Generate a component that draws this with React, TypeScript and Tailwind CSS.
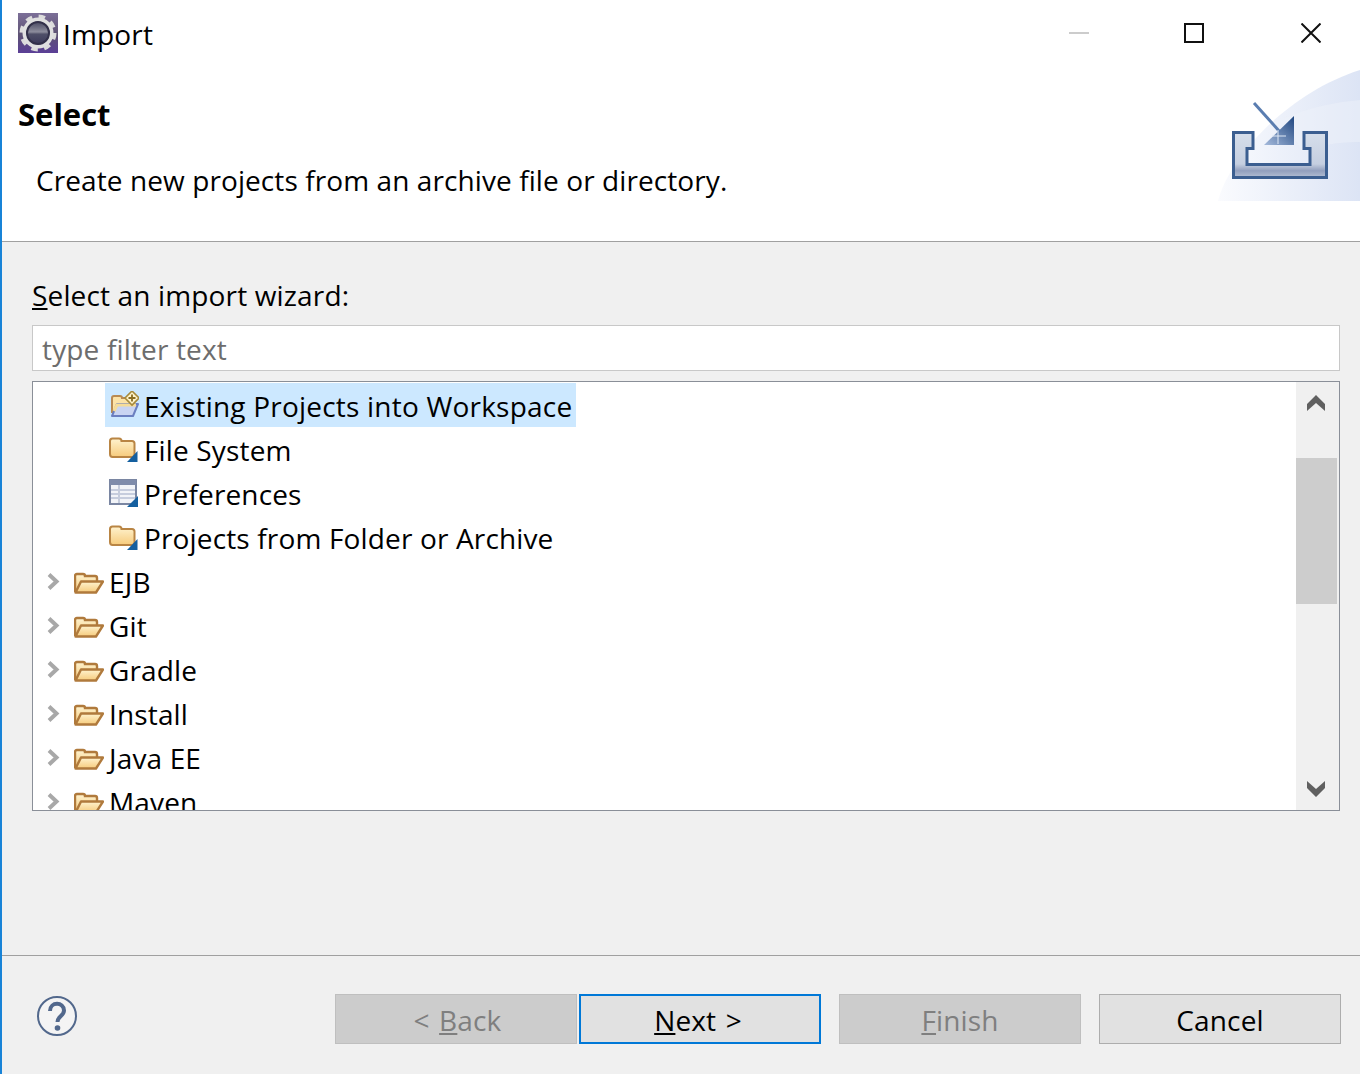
import React from 'react';

const GearIcon = () => (
  <svg width="40" height="40" viewBox="0 0 40 40">
    <defs>
      <linearGradient id="gearBg" x1="0" y1="0" x2="0" y2="1">
        <stop offset="0" stopColor="#7c6f98" />
        <stop offset="0.55" stopColor="#5d5273" />
        <stop offset="1" stopColor="#5b3f97" />
      </linearGradient>
      <linearGradient id="gearHole" x1="0" y1="0" x2="0" y2="1">
        <stop offset="0" stopColor="#4a4a63" />
        <stop offset="0.45" stopColor="#8d8d9c" />
        <stop offset="0.55" stopColor="#4f4f68" />
        <stop offset="1" stopColor="#3c3a5a" />
      </linearGradient>
    </defs>
    <rect width="40" height="40" fill="url(#gearBg)" />
    <circle cx="20" cy="20" r="15" fill="none" stroke="#dcdcdc" strokeWidth="7" strokeDasharray="5.9 5.9" />
    <circle cx="20" cy="20" r="13.5" fill="none" stroke="#e0e0e0" strokeWidth="4" />
    <circle cx="20" cy="20" r="11" fill="url(#gearHole)" stroke="#33314a" strokeWidth="2" />
  </svg>
);

const Banner = () => (
  <svg width="142" height="131" viewBox="0 0 142 131">
    <defs>
      <linearGradient id="swoosh" x1="0" y1="0.6" x2="1" y2="0.6">
        <stop offset="0" stopColor="#fafbfe" />
        <stop offset="1" stopColor="#dce4f5" />
      </linearGradient>
      <linearGradient id="tray" x1="0" y1="0" x2="0" y2="1">
        <stop offset="0" stopColor="#d6deeb" />
        <stop offset="0.7" stopColor="#c5cfe0" />
        <stop offset="0.85" stopColor="#929fbd" />
        <stop offset="1" stopColor="#b4bfd4" />
      </linearGradient>
      <linearGradient id="tri" x1="1" y1="0" x2="0" y2="1">
        <stop offset="0" stopColor="#1f4680" />
        <stop offset="1" stopColor="#a6bbdc" />
      </linearGradient>
    </defs>
    <path d="M0 131 C12 85 72 22 142 0 V131 Z" fill="url(#swoosh)" />
    <path d="M66 48 C90 38 116 32 142 30 V72 C118 72 100 76 84 82 Z" fill="#eef2fa" opacity="0.5" />
    <path d="M15.5 62.5 H35 V78.5 H29 V94.5 H92 V78.5 H86 V62.5 H108.5 V107.5 H15.5 Z" fill="url(#tray)" stroke="#3b5e90" strokeWidth="3" />
    <polygon points="76,46 46,75 76,75" fill="url(#tri)" />
    <line x1="36" y1="33" x2="62" y2="62" stroke="#5a7db0" strokeWidth="3" />
    <path d="M60 60 V74 M54 66 H68" stroke="#dfe8f5" strokeWidth="1" />
  </svg>
);

const FolderGradient = ({ id }: { id: string }) => (
  <defs>
    <linearGradient id={id} x1="0" y1="0" x2="0" y2="1">
      <stop offset="0" stopColor="#fff3cf" />
      <stop offset="1" stopColor="#f6cb7c" />
    </linearGradient>
  </defs>
);

const OpenFolder = () => (
  <svg width="30" height="22" viewBox="0 0 30 22" className="shrink-0">
    <FolderGradient id="openFill" />
    <path d="M1 20 V4 Q1 2 3 2 H9 Q11 2 11 4 H21 Q23 4 23 6 V9" fill="url(#openFill)" stroke="#b07a3c" strokeWidth="2.4" />
    <path d="M1.5 20.5 L7 9.5 H29 L22 20.5 Z" fill="url(#openFill)" stroke="#b07a3c" strokeWidth="2.4" strokeLinejoin="round" />
  </svg>
);

const ClosedFolder = ({ id }: { id: string }) => (
  <svg width="30" height="25" viewBox="0 0 30 25" className="shrink-0">
    <FolderGradient id={id} />
    <path d="M1 17 V4 Q1 1.5 3.5 1.5 H10 Q12.5 1.5 12.5 4 H23 Q25.5 4 25.5 6.5 V17 Q25.5 20 23 20 H3.5 Q1 20 1 17 Z" fill={`url(#${id})`} stroke="#b98544" strokeWidth="2" />
    <polygon points="28.5,14 28.5,25 18,25" fill="#145f9f" />
  </svg>
);

const PrefsIcon = () => (
  <svg width="30" height="28" viewBox="0 0 30 28" className="shrink-0">
    <rect x="1" y="1" width="26" height="24" fill="#f2f4f8" stroke="#7a86a2" strokeWidth="2" />
    <rect x="1" y="1" width="26" height="5" fill="#7f8cab" />
    <path d="M2 11 H26 M2 15 H26 M2 19 H26 M10 6 V24" stroke="#c6cddd" strokeWidth="2" />
    <polygon points="29,17 29,28 18,28" fill="#145f9f" />
  </svg>
);

const WorkspaceIcon = () => (
  <svg width="30" height="28" viewBox="0 0 30 28" className="shrink-0">
    <path d="M3 22 V7 Q3 5 5 5 H11 Q13 5 13 7 H22 V12" fill="#fce3a7" stroke="#b98a52" strokeWidth="2" />
    <path d="M3 25 L8 13 H29 L24 25 Z" fill="#c9d4f2" stroke="#6b7fc0" strokeWidth="2" strokeLinejoin="round" />
    <path d="M5 20 L8 14 H27" fill="none" stroke="#f6dc98" strokeWidth="3" />
    <polygon points="23,0 30,7 23,14 16,7" fill="#fff4cc" stroke="#a78a3a" strokeWidth="1.6" />
    <path d="M23 3.5 V10.5 M19.5 7 H26.5" stroke="#8a6d22" strokeWidth="1.8" />
  </svg>
);

const Chevron = () => (
  <svg width="13" height="17" viewBox="0 0 13 17" className="shrink-0">
    <path d="M2 1.5 L9.5 8.5 L2 15.5" fill="none" stroke="#a8a8a8" strokeWidth="4" />
  </svg>
);

const ScrollArrow = ({ up }: { up: boolean }) => (
  <svg width="18" height="16" viewBox="0 0 18 16">
    <path d={up ? 'M0 16 V9 L9 0 L18 9 V16 L9 8 Z' : 'M0 0 V7 L9 16 L18 7 V0 L9 8 Z'} fill="#606060" />
  </svg>
);

const HelpIcon = () => (
  <svg width="40" height="40" viewBox="0 0 40 40">
    <circle cx="20" cy="20" r="19" fill="#f4f4f4" stroke="#52688c" strokeWidth="2" />
    <path d="M13 15 C13 5.5 27 5.5 27 14.5 C27 20 20.5 20 20.5 26" fill="none" stroke="#52688c" strokeWidth="4" />
    <circle cx="20.5" cy="32" r="2.8" fill="#52688c" />
  </svg>
);

const childRows = [
  { label: 'Existing Projects into Workspace', icon: <WorkspaceIcon />, selected: true },
  { label: 'File System', icon: <ClosedFolder id="closedFill1" /> },
  { label: 'Preferences', icon: <PrefsIcon /> },
  { label: 'Projects from Folder or Archive', icon: <ClosedFolder id="closedFill2" /> },
];

const groupRows = ['EJB', 'Git', 'Gradle', 'Install', 'Java EE', 'Maven'];

export default function App() {
  return (
    <div className="w-[1360px] h-[1074px] flex flex-col bg-[#f0f0f0] border-l-2 border-[#1883d7] overflow-hidden font-['Open_Sans',sans-serif] text-[28px] tracking-[0.15px] leading-[40px] text-black">
      {/* Header */}
      <div className="h-[242px] shrink-0 bg-white border-b border-[#a0a0a0] flex flex-col">
        <div className="h-[68px] shrink-0 flex items-start pl-[16px] pt-[13px]">
          <GearIcon />
          <span className="ml-[5px] mt-px">Import</span>
          <div className="ml-auto mr-[39px] mt-[10px] flex items-center">
            <div className="w-[20px] h-[2px] bg-[#cccccc]" />
            <div className="w-[20px] h-[20px] ml-[95px] border-2 border-[#111111]" />
            <svg width="20" height="20" viewBox="0 0 20 20" className="ml-[97px]">
              <path d="M0.5 0.5 L19.5 19.5 M19.5 0.5 L0.5 19.5" stroke="#111111" strokeWidth="2" />
            </svg>
          </div>
        </div>
        <div className="flex flex-1 justify-between">
          <div className="pl-[16px]">
            <h1 className="font-bold text-[31px] tracking-normal mt-[26px]">Select</h1>
            <p className="ml-[18px] mt-[26px] tracking-[0.09px]">Create new projects from an archive file or directory.</p>
          </div>
          <div className="mt-[2px]">
            <Banner />
          </div>
        </div>
      </div>

      {/* Wizard list */}
      <div className="flex-1 flex flex-col pl-[30px] pr-[20px] pt-[33px]">
        <label className="h-[50px]">
          <span className="underline">S</span>elect an import wizard:
        </label>
        <div className="h-[46px] bg-white border border-[#c8c8c8] pl-[9px] pt-[2px] flex items-center text-[#6d6d6d]">
          type filter text
        </div>
        <div className="mt-[10px] h-[430px] bg-white border border-[#8a8f98] flex overflow-hidden">
          <div className="flex-1 pt-[1px]">
            {childRows.map((row) => (
              <div key={row.label} className="h-[44px] pl-[72px] flex">
                <div className={`h-[44px] pl-[4px] pr-[4px] flex items-center ${row.selected ? 'bg-[#cce8ff] tracking-[0.21px]' : ''}`}>
                  {row.icon}
                  <span className="ml-[5px] pt-[2px]">{row.label}</span>
                </div>
              </div>
            ))}
            {groupRows.map((name) => (
              <div key={name} className="h-[44px] pl-[14px] flex items-center">
                <Chevron />
                <div className="ml-[14px] pt-[3px]">
                  <OpenFolder />
                </div>
                <span className="ml-[5px] pt-[2px]">{name}</span>
              </div>
            ))}
          </div>
          <div className="w-[43px] shrink-0 bg-[#f0f0f0] flex flex-col items-center">
            <div className="h-[76px] pt-[13px] pr-[4px]">
              <ScrollArrow up />
            </div>
            <div className="w-[41px] h-[146px] self-start bg-[#cdcdcd]" />
            <div className="mt-auto mb-[13px] pr-[4px]">
              <ScrollArrow up={false} />
            </div>
          </div>
        </div>
      </div>

      {/* Footer */}
      <div className="h-[119px] shrink-0 border-t border-[#a0a0a0] pl-[35px] pr-[19px] pt-[38px] flex items-start">
        <div className="mt-[2px]">
          <HelpIcon />
        </div>
        <div className="ml-auto flex">
          <button className="w-[242px] h-[50px] pt-[2px] pl-[3px] bg-[#cccccc] border border-[#bfbfbf] text-[#7f7f7f]">
            &lt; <span className="underline ml-[2px]">B</span>ack
          </button>
          <button className="w-[242px] h-[50px] pt-[2px] pr-[4px] ml-[2px] bg-[#e1e1e1] border-2 border-[#0078d7]">
            <span className="underline">N</span>ext <span className="ml-[2px]">&gt;</span>
          </button>
          <button className="w-[242px] h-[50px] pt-[2px] ml-[18px] bg-[#cccccc] border border-[#bfbfbf] text-[#7f7f7f]">
            <span className="underline">F</span>inish
          </button>
          <button className="w-[242px] h-[50px] pt-[2px] ml-[18px] bg-[#e1e1e1] border border-[#adadad]">Cancel</button>
        </div>
      </div>
    </div>
  );
}
